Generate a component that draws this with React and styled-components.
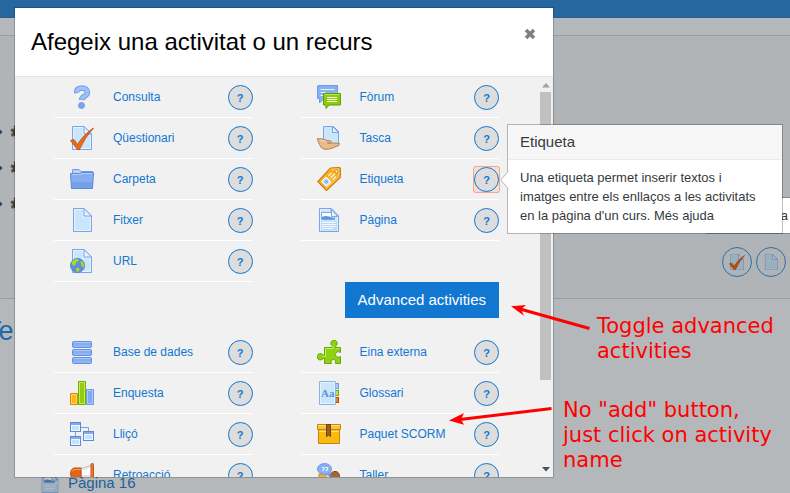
import React from 'react';
import styled, { createGlobalStyle } from 'styled-components';

const GlobalStyle = createGlobalStyle`
  * {
    box-sizing: border-box;
  }

  body {
    margin: 0;
    background: #b4b8bb;
    font-family: 'Liberation Sans', Arial, sans-serif;
    color: #373a3c;
  }

  button {
    font-family: inherit;
    cursor: pointer;
  }
`;

/* ---------- course page behind the dialog ---------- */

const Page = styled.div`
  position: relative;
  min-height: 100vh;
  overflow: hidden;
`;

const TopBar = styled.div`
  height: 18px;
  background: #2667a0;
  border-bottom: 1px solid #295f8f;
`;

const NavStrip = styled.div`
  height: 17px;
`;

const Section = styled.section`
  position: relative;
  padding: 78px 4px 21px 0;
  background: #b0b4b7;
  border-top: 1px solid #9a9ea1;
  border-bottom: 1px solid #9a9ea1;
`;

const EditRow = styled.div`
  display: flex;
  align-items: center;
  height: 36px;
`;

const QuickIcons = styled.div`
  display: flex;
  justify-content: flex-end;
  gap: 4px;
  padding-top: 25px;
`;

const QuickButton = styled.button`
  display: flex;
  align-items: center;
  justify-content: center;
  width: 30px;
  height: 30px;
  padding: 0;
  background: transparent;
  border: 1px solid #2a6fb0;
  border-radius: 50%;

  svg {
    width: 16px;
    height: 16px;
    filter: brightness(0.76);
  }
`;

const PageTip = styled.div`
  position: absolute;
  top: 161px;
  right: 0;
  width: 84px;
  height: 37px;
  padding: 8px 2px;
  overflow: hidden;
  background: #fff;
  border: 1px solid #85898c;
  border-right: 0;
  font-size: 13px;
  line-height: 19px;
  text-align: right;
`;

const Topic = styled.h3`
  margin: 0 0 0 -15px;
  padding-top: 17px;
  color: #1f69aa;
  font-size: 27px;
  font-weight: normal;
  line-height: 30px;
`;

const PageLink = styled.a`
  display: flex;
  align-items: center;
  gap: 8px;
  margin: 127px 0 0 40px;
  color: #1f5f99;
  font-size: 15px;
  line-height: 20px;
  text-decoration: none;

  svg {
    width: 20px;
    height: 20px;
    filter: brightness(0.76);
  }
`;

/* ---------- dialog ---------- */

const Overlay = styled.div`
  position: absolute;
  inset: 0;
  display: grid;
  grid-template-columns: minmax(0, 1fr) 236px;
  padding: 7px 0 15px 14px;
`;

const Modal = styled.div`
  position: relative;
  display: flex;
  flex-direction: column;
  min-height: 0;
  background: #f1f1f1;
  background-clip: padding-box;
  border: 1px solid rgba(0, 0, 0, 0.2);
`;

const ModalHeader = styled.div`
  display: flex;
  align-items: center;
  justify-content: space-between;
  height: 69px;
  padding: 0 16px;
  background: #fff;
  border-bottom: 1px solid #e5e5e5;
`;

const Title = styled.h2`
  margin: 0;
  color: #000;
  font-size: 24px;
  font-weight: normal;
  line-height: 32px;
`;

const Close = styled.button`
  display: flex;
  padding: 0 1px 16px;
  background: transparent;
  border: 0;
`;

const ModalBody = styled.div`
  display: flex;
  flex: 1;
  min-height: 0;
  overflow: hidden;
`;

const Content = styled.div`
  flex: 1;
  padding: 0 39px;
`;

const Activities = styled.div`
  display: grid;
  grid-template-columns: 1fr 1fr;
  grid-template-rows: repeat(5, 41px);
  grid-auto-flow: column;
  column-gap: 48px;
`;

const Row = styled.div`
  display: flex;
  align-items: center;
  padding: 0 0 0 16px;
  border-bottom: 1px solid #fff;

  > svg {
    flex: none;
    width: 24px;
    height: 24px;
  }
`;

const ActivityLink = styled.a`
  flex: 1;
  padding-left: 19px;
  color: #1177d1;
  font-size: 12px;
  line-height: 18px;
  white-space: nowrap;
  text-decoration: none;
`;

const HelpFrame = styled.span`
  display: flex;
  margin-top: 1px;
  border-radius: 2px;
  background: ${(props) => (props.$focused ? '#f3dfd7' : 'transparent')};
  box-shadow: ${(props) => (props.$focused ? '0 0 0 1px #f3a88e' : 'none')};
`;

const Help = styled.button`
  width: 25px;
  height: 25px;
  padding: 1px 0 0;
  color: #1177d1;
  background: #ddd;
  border: 1px solid #1177d1;
  border-radius: 50%;
  font-size: 11px;
  font-weight: bold;
  line-height: 22px;
`;

const ToggleBar = styled.div`
  display: flex;
  justify-content: flex-end;
  padding-bottom: 14px;
`;

const ToggleButton = styled.button`
  height: 36px;
  padding: 0 13px;
  color: #fff;
  background: #1177d1;
  border: 0;
  font-size: 15px;
  line-height: 20px;
`;

const ScrollTrack = styled.div`
  display: flex;
  flex-direction: column;
  justify-content: space-between;
  align-items: center;
  width: 15px;
  padding: 6px 0 5px;
`;

const ScrollThumb = styled.div`
  width: 11px;
  height: 74%;
  margin: 4px 0 auto;
  background: #c1c1c1;
`;

const Popover = styled.div`
  position: absolute;
  top: 116px;
  left: calc(100% - 46px);
  width: 276px;
  background: #fff;
  background-clip: padding-box;
  border: 1px solid rgba(0, 0, 0, 0.25);
`;

const PopoverTitle = styled.h3`
  margin: 0;
  padding: 8px 12px;
  background: #f7f7f7;
  border-bottom: 1px solid #ebebeb;
  font-size: 15px;
  font-weight: normal;
  line-height: 18px;
`;

const PopoverText = styled.p`
  margin: 0;
  padding: 8px 12px;
  font-size: 13px;
  line-height: 19px;
`;

const PopoverArrow = styled.svg`
  position: absolute;
  top: 46px;
  left: -8px;
  width: 9px;
  height: 18px;
`;

/* ---------- red notes ---------- */

const Notes = styled.aside`
  position: relative;
  display: flex;
  flex-direction: column;
  gap: 34px;
  padding: 307px 0 0 9px;
  color: #f00;
  font-family: 'DejaVu Sans', sans-serif;
  font-size: 21px;
  line-height: 25px;
`;

const Note = styled.p`
  margin: 0;
  padding-left: ${(props) => (props.$indent ? '34px' : '0')};
  white-space: nowrap;
`;

const Arrows = styled.svg`
  position: absolute;
  top: 293px;
  left: -108px;
  width: 150px;
  height: 130px;
`;

/* ---------- icons ---------- */

const BLUE = '#6f9ae6';

const Svg = ({ children }) => (
  <svg width="24" height="24" viewBox="0 0 24 24" fill="none" aria-hidden="true">
    {children}
  </svg>
);

const Sheet = ({ x = 2 }) => (
  <g>
    <path d={`M${x + 0.5} .5H14l7.5 7.5v15.500H${x + 0.5}z`} fill="#c9e6fa" stroke="#7ba4ec" />
    <path d={`M${x + 1.5} 1.500H13v7.500h7.500v13.500H${x + 1.5}z`} stroke="#e4f4ff" />
    <path d="M14 .5v7.500h7.500z" fill="#e6f4ff" stroke="#7ba4ec" />
  </g>
);

const icons = {
  choice: (
    <Svg>
      <path d="M7 8C6 4 9 3 12 3s5.500 1.500 5.500 4.500c0 3.500-5.500 3.500-6 7.500" stroke={BLUE} strokeWidth="5.500" />
      <path d="M7 7.300C6.500 4.300 9 3 12 3s5.500 1.500 5.500 4.500c0 3.500-5.500 3.500-6 7" stroke="#9dc2f7" strokeWidth="3.500" />
      <circle cx="11.500" cy="20.500" r="3" fill="#7ba6ef" stroke={BLUE} />
    </Svg>
  ),
  quiz: (
    <Svg>
      <Sheet />
      <path d="M.5 14.500 4 13.500l3.500 5Q14 8 23.500 2 14.500 12 9.500 23.500H7.500z" fill="#ec6a14" stroke="#bd4709" strokeWidth=".8" />
    </Svg>
  ),
  folder: (
    <Svg>
      <path d="M2.500 7V3q0-.5.5-.5h6l2 2h11.500V8z" fill="#b9d3fa" stroke={BLUE} />
      <path d="M.5 6.500h9l2-1h12L22.500 21.500h-21z" fill="#86aeef" stroke="#5b87d8" />
      <path d="M1.600 7.500h8.400l2-1h10.400" stroke="#b4d0fa" />
      <path d="M1.800 15h20.400l-.5 6H2.200z" fill="#74a0e8" />
    </Svg>
  ),
  file: (
    <Svg>
      <Sheet x={3} />
    </Svg>
  ),
  url: (
    <Svg>
      <Sheet />
      <circle cx="7.500" cy="16.500" r="7" fill="#5f8fdc" stroke="#5682d0" />
      <path d="M1.500 14c1.500-3 4-4.500 6-4l1.500 1-1 1.500-2 .5-.5 2.500-2 1.500zM6 19l3 0 .5 2-1.500 2-1.500-.5zM10.500 12l2 .5 1.500 3-.5 3-2-1.500-.5-2.500z" fill="#a8e010" />
    </Svg>
  ),
  forum: (
    <Svg>
      <path d="M1 .5h19.500v13H7L2.500 18v-4.500H.5V1z" fill="#85b0f3" stroke={BLUE} />
      <path d="M3.500 4.500h14M3.500 7.500h5M3.500 10.500h3" stroke="#e8f2ff" />
      <path d="M6.500 8.500h17v11.500H12l-3 3.500V20H6.500z" fill="#8bcb0b" stroke="#5f9e08" />
      <path d="M7.500 9.500h15" stroke="#b5e64a" />
      <path d="M10 12.500h10M10 14.500h10M10 16.500h10" stroke="#f4fce0" />
    </Svg>
  ),
  assign: (
    <Svg>
      <path d="M6.500.5h10l5 5v14.500h-15z" fill="#c9e6fa" stroke="#7ba4ec" />
      <path d="M15.500.5v6h6z" fill="#e6f4ff" stroke="#7ba4ec" />
      <path d="M.5 12.500c3 .5 6 0 8 1.500 2 .8 5 .3 6 1.500.5 1-2 1.500-4 1.500 4 .5 8-.5 12 .5 1 .8-1 2-3.500 3-4 2-8 3.500-12 2.500-3-.8-3.500-2.500-4.500-4.500-.8-2-2-4-2-6z" fill="#e9bb8c" stroke="#b7824f" />
      <path d="M3 14.500c2 .3 4 .2 5.500 1.200" stroke="#f8dcbc" />
    </Svg>
  ),
  label: (
    <Svg>
      <path d="M13.500 1 22 .5q1.500 0 1.500 1.500l-.3 8.500L9.500 23.500.8 14.500z" fill="#f8ae25" stroke="#cd7f12" strokeWidth="1.200" />
      <path d="M14 2.300l7.800-.3-.2 7.800L9.500 21.500" stroke="#fbd06c" />
      <circle cx="19.500" cy="4.500" r="1.500" fill="#fff3d8" stroke="#b9740d" strokeWidth=".8" />
      <path d="M4.500 14.500 9 10l5 5-4.500 4.500z" fill="#cfe4fb" stroke="#fff" />
      <circle cx="9.200" cy="14.800" r="2" fill="#8db8ee" />
      <path d="m11.500 9 3-3M13.500 11l4.500-4.500M15.500 13l3.500-3.500" stroke="#fff3d8" strokeWidth="1.200" />
    </Svg>
  ),
  page: (
    <Svg>
      <Sheet />
      <path d="M4.500 4.500h13v7h-13z" fill="#fff" stroke="#7ba4ec" />
      <path d="M5 9c3-2 6-1 12 1v1H5z" fill="#5d94dd" />
      <path d="M14.500 1v7.500h6z" fill="#e6f4ff" stroke="#7ba4ec" />
      <path d="M4 13.500h16v9H4z" fill="#b9d8f8" />
      <path d="M5 14.500h14M5 16.500h14M5 18.500h14M5 20.500h12" stroke="#f2f9ff" />
    </Svg>
  ),
  database: (
    <Svg>
      {[1.5, 9.5, 17.5].map((y) => (
        <g key={y}>
          <rect x="2.500" y={y} width="19" height="6" rx="1" fill="#85aef0" stroke="#6590e0" />
          <path d={`M4 ${y + 1}h16`} stroke="#a9c8f8" />
          <path d={`M3.500 ${y + 4.5}h17`} stroke="#a9c8f8" strokeWidth=".6" />
        </g>
      ))}
    </Svg>
  ),
  survey: (
    <Svg>
      <path d="M.5 12.500h7v11h-7z" fill="#fbb916" stroke="#d98a0a" />
      <path d="M1.500 13.500h5v9h-5z" stroke="#fdd566" />
      <path d="M8.500.5h7v23h-7z" fill="#93cc10" stroke="#6fae05" />
      <path d="M9.500 1.500h5v21h-5z" stroke="#c0ee55" />
      <path d="M16.500 8.500h7v15h-7z" fill="#82abee" stroke={BLUE} />
      <path d="M17.500 9.500h5v13h-5z" stroke="#abcaf8" />
    </Svg>
  ),
  lesson: (
    <Svg>
      <path d="M11 5.500h7.500V9M5.500 10v4" stroke="#7b9fe0" />
      {[[0.5, 0.5], [13.5, 9.5], [0.5, 14.5]].map(([x, y]) => (
        <g key={`${x}-${y}`}>
          <rect x={x} y={y} width="10" height="9" fill="#c4e4f9" stroke="#5f87dc" />
          <path d={`M${x + 0.5} ${y + 1.5}h9`} stroke="#86aaf0" strokeWidth="2" />
          <rect x={x + 1} y={y + 3} width="8" height="5" stroke="#eef8ff" />
        </g>
      ))}
    </Svg>
  ),
  feedback: (
    <Svg>
      <path d="M11 5C16 4.500 19 3 22 1v20c-3-2-6-4-11-4z" fill="#e2e2e2" stroke="#c4c4c4" />
      <path d="M12 7c4-.5 7-1.500 9-3v8H12z" fill="#fff" />
      <path d="M11 5H4Q.5 6 .5 10.500T4 17h7z" fill="#e56518" stroke="#c24c0a" />
      <path d="M2 8.500q1-2 3-2h6" stroke="#f6a06a" />
      <rect x="21" y=".5" width="2.500" height="21" rx="1" fill="#f07a30" stroke="#c9500c" />
    </Svg>
  ),
  lti: (
    <Svg>
      <path d="M7.500 7.500h7.800V6a3.200 3.200 0 1 1 3.400 0v1.500h4.800v5c-2-1.500-5-.5-5 2s3 3.500 5 2v7H18.500c.8-2.500-.5-4-2.200-4s-3 1.500-2 4H7.500v-5H6a3.200 3.200 0 1 1 0-3.500h1.500z" fill="#8fd010" stroke="#65a60b" />
      <path d="M8.500 8.500h7.500V5.500M8.500 9v7.200H5.300M19.500 8.500h3" stroke="#c2ee62" />
    </Svg>
  ),
  glossary: (
    <Svg>
      <rect x="17" y="2.500" width="4.500" height="5" fill="#a9c6f8" stroke={BLUE} />
      <rect x="17" y="9.500" width="4.500" height="5" fill="#b7e052" stroke="#6fae05" />
      <rect x="17" y="16.500" width="4.500" height="5" fill="#ee7a33" stroke="#c54b08" />
      <path d="M2.500.5h16v23h-16z" fill="#c9e6fa" stroke="#86b2ee" />
      <path d="M3.500 1.500h14v21h-14z" stroke="#e4f4ff" />
      <text x="4" y="16" fill="#5f8fdc" fontFamily="Liberation Serif, serif" fontSize="11" fontWeight="bold">Aa</text>
    </Svg>
  ),
  scorm: (
    <Svg>
      <path d="M1.500 7.500h21v14h-21z" fill="#f9ba12" stroke="#c88312" />
      <path d="M.5 2.500h23v5H.5z" fill="#fbc62c" stroke="#c88312" />
      <path d="M1.500 3.500h21M2.500 9.500h19" stroke="#fde08a" />
      <path d="M9.500 2.500h4v12l-2-1.500-2 1.500z" fill="#9a5f25" stroke="#74410f" />
    </Svg>
  ),
  workshop: (
    <Svg>
      <path d="M2 11h7v11H2z" fill="#f8ae25" stroke="#d98a0a" />
      <path d="M13 15q0-6.500 5-6.500t4.500 6.500v6H13z" fill="#a4673a" stroke="#7d4a22" />
      <path d="M8 10.500 13 13.500v-5z" fill="#7ba6ef" stroke={BLUE} />
      <ellipse cx="7.500" cy="6" rx="7" ry="5.500" fill="#85b0f3" stroke={BLUE} />
      <path d="M5 4.500h2v2L5.500 8M8.500 4.500h2v2L9 8" stroke="#e8f2ff" strokeWidth="1.200" />
    </Svg>
  ),
};

const EditMarks = () => (
  <svg width="24" height="16" viewBox="0 0 24 16" aria-hidden="true">
    <path d="M-1 4.500 2.500 8-1 11.500z" fill="#26415b" />
    <circle cx="18" cy="8" r="6" fill="none" stroke="#5c5036" strokeWidth="3" strokeDasharray="2.700 2.012" />
    <circle cx="18" cy="8" r="3.500" fill="none" stroke="#3f4042" strokeWidth="4" />
  </svg>
);

const standard = [
  ['choice', 'Consulta'],
  ['quiz', 'Qüestionari'],
  ['folder', 'Carpeta'],
  ['file', 'Fitxer'],
  ['url', 'URL'],
  ['forum', 'Fòrum'],
  ['assign', 'Tasca'],
  ['label', 'Etiqueta'],
  ['page', 'Pàgina'],
];

const advancedLeft = [
  ['database', 'Base de dades'],
  ['survey', 'Enquesta'],
  ['lesson', 'Lliçó'],
  ['feedback', 'Retroacció'],
];

const advancedRight = [
  ['lti', 'Eina externa'],
  ['glossary', 'Glossari'],
  ['scorm', 'Paquet SCORM'],
  ['workshop', 'Taller'],
];

const AdvancedActivities = styled(Activities)`
  grid-template-rows: repeat(4, 41px);
`;

const Activity = ({ icon, name }) => (
  <Row>
    {icons[icon]}
    <ActivityLink href="#">{name}</ActivityLink>
    <HelpFrame $focused={icon === 'label'}>
      <Help type="button" aria-label={`Ajuda: ${name}`}>?</Help>
    </HelpFrame>
  </Row>
);

const App = () => {
  return (
    <Page>
      <GlobalStyle />
      <TopBar />
      <NavStrip />
      <Section>
        <EditRow><EditMarks /></EditRow>
        <EditRow><EditMarks /></EditRow>
        <EditRow><EditMarks /></EditRow>
        <QuickIcons>
          <QuickButton type="button" aria-label="Qüestionari">{icons.quiz}</QuickButton>
          <QuickButton type="button" aria-label="Fitxer">{icons.file}</QuickButton>
        </QuickIcons>
        <PageTip>a</PageTip>
      </Section>
      <Topic>Te</Topic>
      <PageLink href="#">{icons.page}Pàgina 16</PageLink>

      <Overlay>
        <Modal role="dialog" aria-labelledby="chooser-title">
          <ModalHeader>
            <Title id="chooser-title">Afegeix una activitat o un recurs</Title>
            <Close type="button" aria-label="Tanca">
              <svg width="12" height="12" viewBox="0 0 12 12">
                <path d="m2 2 8 8M10 2l-8 8" stroke="#7f7f7f" strokeWidth="3.500" />
              </svg>
            </Close>
          </ModalHeader>
          <ModalBody>
            <Content>
              <Activities>
                {standard.map(([icon, name]) => <Activity key={icon} icon={icon} name={name} />)}
              </Activities>
              <ToggleBar>
                <ToggleButton type="button">Advanced activities</ToggleButton>
              </ToggleBar>
              <AdvancedActivities>
                {[...advancedLeft, ...advancedRight].map(([icon, name]) => (
                  <Activity key={icon} icon={icon} name={name} />
                ))}
              </AdvancedActivities>
            </Content>
            <ScrollTrack>
              <svg width="8" height="5" viewBox="0 0 8 5"><path d="M0 4.500 4 0l4 4.500z" fill="#a3a3a3" /></svg>
              <ScrollThumb />
              <svg width="8" height="5" viewBox="0 0 8 5"><path d="M0 0h8L4 4.500z" fill="#505050" /></svg>
            </ScrollTrack>
          </ModalBody>
          <Popover role="tooltip">
            <PopoverArrow viewBox="0 0 9 18">
              <path d="M8.500 0 .8 9l7.700 9z" fill="#fff" />
              <path d="M8 .5.8 9 8 17.500" fill="none" stroke="#b8b8b8" />
            </PopoverArrow>
            <PopoverTitle>Etiqueta</PopoverTitle>
            <PopoverText>
              Una etiqueta permet inserir textos i imatges entre els enllaços a les activitats en la pàgina d'un curs. Més ajuda
            </PopoverText>
          </Popover>
        </Modal>
        <Notes>
          <Note $indent>Toggle advanced<br />activities</Note>
          <Note>No "add" button,<br />just click on activity<br />name</Note>
          <Arrows viewBox="446 300 150 130">
            <path d="m520 309 69.500 19.500M460 419.500l91.500-11" stroke="#f00" strokeWidth="3" />
            <path d="m511 306.300 15-1.300-5 4.300 3 6.500zM449 420.500l15-7.500-3 6.500 3 5.200z" fill="#f00" />
          </Arrows>
        </Notes>
      </Overlay>
    </Page>
  );
};

export default App;
